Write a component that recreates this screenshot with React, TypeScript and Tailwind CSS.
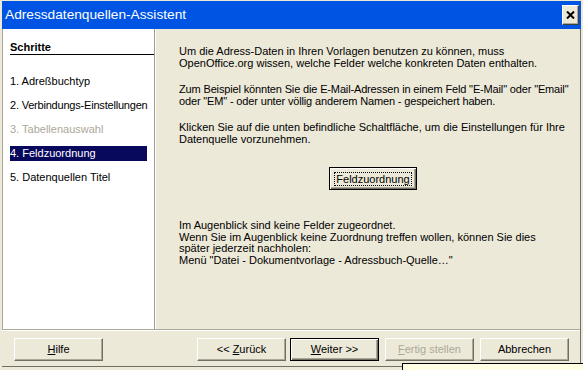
import React from "react";

const btnBase =
  "h-[23px] w-[89px] flex items-center justify-center bg-[#ECE9D8] border border-t-white border-l-white border-r-[#716F64] border-b-[#716F64] shadow-[inset_-1px_-1px_0_#ACA899]";
const btnDefault =
  "h-[23px] w-[89px] flex items-center justify-center bg-[#ECE9D8] border border-black shadow-[inset_1px_1px_0_#fff,inset_-1px_-1px_0_#716F64,inset_-2px_-2px_0_#ACA899]";

export default function App() {
  return (
    <div className="relative w-[583px] h-[370px] overflow-hidden bg-[#ECE9D8] font-['Liberation_Sans',Arial,sans-serif] text-[11px] text-black">
      <div className="flex flex-col h-full pt-[1px] pl-[2px] pr-[2px] pb-[3px]">
        {/* Title bar */}
        <div className="h-[28px] shrink-0 bg-[#0054E3] flex items-center justify-between pl-[3px] pr-[2px]">
          <span className="text-white text-[13.7px] leading-none">Adressdatenquellen-Assistent</span>
          <div className="w-[17px] h-[20px] bg-[#ECE9D8] border border-t-white border-l-white border-r-[#404040] border-b-[#404040] shadow-[inset_-1px_-1px_0_#ACA899] flex items-center justify-center">
            <svg width="9" height="8" viewBox="0 0 9 8">
              <path d="M1 0.5 L8 7.5 M8 0.5 L1 7.5" stroke="#000" strokeWidth="2" />
            </svg>
          </div>
        </div>

        {/* Body */}
        <div className="flex-1 flex flex-col border-r border-b border-[#716F64]">
          <div className="h-[300px] flex">
            {/* Left steps panel */}
            <div className="w-[152px] bg-white border-l border-[#ACA899] pl-[7px] pt-[12px] whitespace-nowrap">
              <div className="h-[14px] leading-[13px] font-bold border-b border-black">Schritte</div>
              <div className="mt-[19px] flex flex-col gap-[9px]">
                <div className="w-[137px] h-[15px] leading-[15px]">1. Adreßbuchtyp</div>
                <div className="w-[137px] h-[15px] leading-[15px] tracking-[-0.2px]">2. Verbindungs-Einstellungen</div>
                <div className="w-[137px] h-[15px] leading-[15px] text-[#ACA899]">3. Tabellenauswahl</div>
                <div className="w-[137px] h-[15px] leading-[15px] bg-[#08085C] text-white">4. Feldzuordnung</div>
                <div className="w-[137px] h-[15px] leading-[15px]">5. Datenquellen Titel</div>
              </div>
            </div>
            <div className="w-[1px] bg-[#9D9B90]" />
            <div className="w-[1px] bg-white" />

            {/* Content */}
            <div className="flex-1 pl-[23px] pt-[16px] whitespace-nowrap">
              <p className="leading-[12px]">
                Um die Adress-Daten in Ihren Vorlagen benutzen zu können, muss
                <br />
                OpenOffice.org wissen, welche Felder welche konkreten Daten enthalten.
              </p>
              <p className="leading-[12px] mt-[14px] tracking-[-0.15px]">
                Zum Beispiel könnten Sie die E-Mail-Adressen in einem Feld "E-Mail" oder "Email"
                <br />
                oder "EM" - oder unter völlig anderem Namen - gespeichert haben.
              </p>
              <p className="leading-[12px] mt-[14px]">
                Klicken Sie auf die unten befindliche Schaltfläche, um die Einstellungen für Ihre
                <br />
                Datenquelle vorzunehmen.
              </p>
              <div className="mt-[22px] ml-[150px]">
                <div className="h-[23px] w-[88px] flex items-center justify-center bg-[#ECE9D8] border border-black shadow-[inset_1px_1px_0_#fff,inset_-1px_-1px_0_#716F64,inset_-2px_-2px_0_#ACA899]">
                  <span className="border border-dotted border-black px-[1px] leading-[12px]">Feldzuordnung</span>
                </div>
              </div>
              <p className="leading-[11.5px] mt-[30px]">
                Im Augenblick sind keine Felder zugeordnet.
                <br />
                Wenn Sie im Augenblick keine Zuordnung treffen wollen, können Sie dies
                <br />
                später jederzeit nachholen:
                <br />
                Menü "Datei - Dokumentvorlage - Adressbuch-Quelle…"
              </p>
            </div>
          </div>

          {/* Horizontal separator */}
          <div className="h-[1px] bg-[#ACA899]" />
          <div className="h-[1px] bg-white" />

          {/* Buttons */}
          <div className="flex pt-[7px]">
            <div className={`${btnBase} ml-[12px]`}>
              <span>
                <span className="underline">H</span>ilfe
              </span>
            </div>
            <div className={`${btnBase} ml-[94px]`}>
              <span>
                &lt;&lt; <span className="underline">Z</span>urück
              </span>
            </div>
            <div className={`${btnDefault} ml-[4px]`}>
              <span>
                <span className="underline">W</span>eiter &gt;&gt;
              </span>
            </div>
            <div className={`${btnBase} ml-[6px] text-[#ACA899]`}>
              <span>
                <span className="underline">F</span>ertig stellen
              </span>
            </div>
            <div className={`${btnBase} ml-[6px]`}>
              <span>Abbrechen</span>
            </div>
          </div>
        </div>
      </div>

      {/* Tooltip peeking in at bottom right */}
      <div className="absolute left-[402px] top-[363px] w-[200px] h-[20px] bg-[#FFFFE1] border border-black" />
    </div>
  );
}
